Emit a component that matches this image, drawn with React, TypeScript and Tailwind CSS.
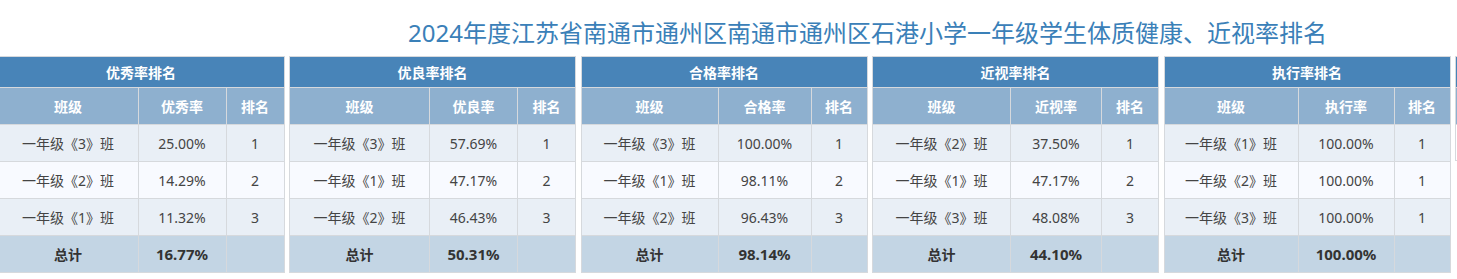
import React from "react";

type Row = [string, string, string];
type Table = {
  title: string;
  col: string;
  rows: Row[];
  total: string;
  widths: [number, number, number];
};

const tables: Table[] = [
  {
    title: "优秀率排名",
    col: "优秀率",
    rows: [
      ["一年级《3》班", "25.00%", "1"],
      ["一年级《2》班", "14.29%", "2"],
      ["一年级《1》班", "11.32%", "3"],
    ],
    total: "16.77%",
    widths: [140, 88, 58],
  },
  {
    title: "优良率排名",
    col: "优良率",
    rows: [
      ["一年级《3》班", "57.69%", "1"],
      ["一年级《1》班", "47.17%", "2"],
      ["一年级《2》班", "46.43%", "3"],
    ],
    total: "50.31%",
    widths: [140, 88, 58],
  },
  {
    title: "合格率排名",
    col: "合格率",
    rows: [
      ["一年级《3》班", "100.00%", "1"],
      ["一年级《1》班", "98.11%", "2"],
      ["一年级《2》班", "96.43%", "3"],
    ],
    total: "98.14%",
    widths: [137, 93, 56],
  },
  {
    title: "近视率排名",
    col: "近视率",
    rows: [
      ["一年级《2》班", "37.50%", "1"],
      ["一年级《1》班", "47.17%", "2"],
      ["一年级《3》班", "48.08%", "3"],
    ],
    total: "44.10%",
    widths: [138, 91, 57],
  },
  {
    title: "执行率排名",
    col: "执行率",
    rows: [
      ["一年级《1》班", "100.00%", "1"],
      ["一年级《2》班", "100.00%", "1"],
      ["一年级《3》班", "100.00%", "1"],
    ],
    total: "100.00%",
    widths: [134, 96, 56],
  },
];

function RankTable({ t }: { t: Table }) {
  return (
    <div className="w-[286px] shrink-0">
      <table className="w-[286px] table-fixed border-collapse text-[14px]">
        <colgroup>
          <col style={{ width: t.widths[0] }} />
          <col style={{ width: t.widths[1] }} />
          <col style={{ width: t.widths[2] }} />
        </colgroup>
        <thead>
          <tr className="h-[31px] bg-[#4884b8]">
            <th colSpan={3} className="border border-[#d6d9dd] text-center font-bold text-white">
              {t.title}
            </th>
          </tr>
          <tr className="h-[37px] bg-[#8eb0cf]">
            <th className="border border-[#d6d9dd] text-center font-bold text-white">班级</th>
            <th className="border border-[#d6d9dd] text-center font-bold text-white">{t.col}</th>
            <th className="border border-[#d6d9dd] text-center font-bold text-white">排名</th>
          </tr>
        </thead>
        <tbody>
          {t.rows.map((r, i) => (
            <tr key={i} className={i % 2 === 1 ? "h-[37px] bg-[#f8faff]" : "h-[37px] bg-[#e9eff6]"}>
              <td className="border border-[#d6d9dd] text-center text-[#444]">{r[0]}</td>
              <td className="border border-[#d6d9dd] text-center text-[#444]">{r[1]}</td>
              <td className="border border-[#d6d9dd] text-center text-[#444]">{r[2]}</td>
            </tr>
          ))}
          <tr className="h-[37px] bg-[#c3d5e4]">
            <td className="border border-[#d6d9dd] text-center font-bold text-[#333]">总计</td>
            <td className="border border-[#d6d9dd] text-center text-[15px] font-bold text-[#333]">{t.total}</td>
            <td className="border border-[#d6d9dd]"></td>
          </tr>
        </tbody>
      </table>
    </div>
  );
}

export default function App() {
  return (
    <div
      className="h-[279px] w-[1457px] overflow-hidden bg-white"
      style={{ fontFamily: '"Noto Sans", "Noto Sans CJK SC", sans-serif' }}
    >
      <div className="flex h-[56px] items-start pl-[408px] pt-[16px]">
        <h1 className="text-[24px] leading-[34px] font-normal text-[#3a80b8] whitespace-nowrap">
          2024年度江苏省南通市通州区南通市通州区石港小学一年级学生体质健康、近视率排名
        </h1>
      </div>
      <div className="ml-[-2.5px] flex gap-[5.5px]">
        {tables.map((t) => (
          <RankTable key={t.title} t={t} />
        ))}
        <div className="w-[286px] shrink-0">
          <table className="w-[286px] border-collapse">
            <tbody>
              <tr className="h-[31px] bg-[#4884b8]">
                <td className="border border-[#d6d9dd]"></td>
              </tr>
              <tr className="h-[37px] bg-[#8eb0cf]">
                <td className="border border-[#d6d9dd]"></td>
              </tr>
              <tr className="h-[36px] bg-white">
                <td className="border border-[#d6d9dd]"></td>
              </tr>
            </tbody>
          </table>
        </div>
      </div>
    </div>
  );
}
